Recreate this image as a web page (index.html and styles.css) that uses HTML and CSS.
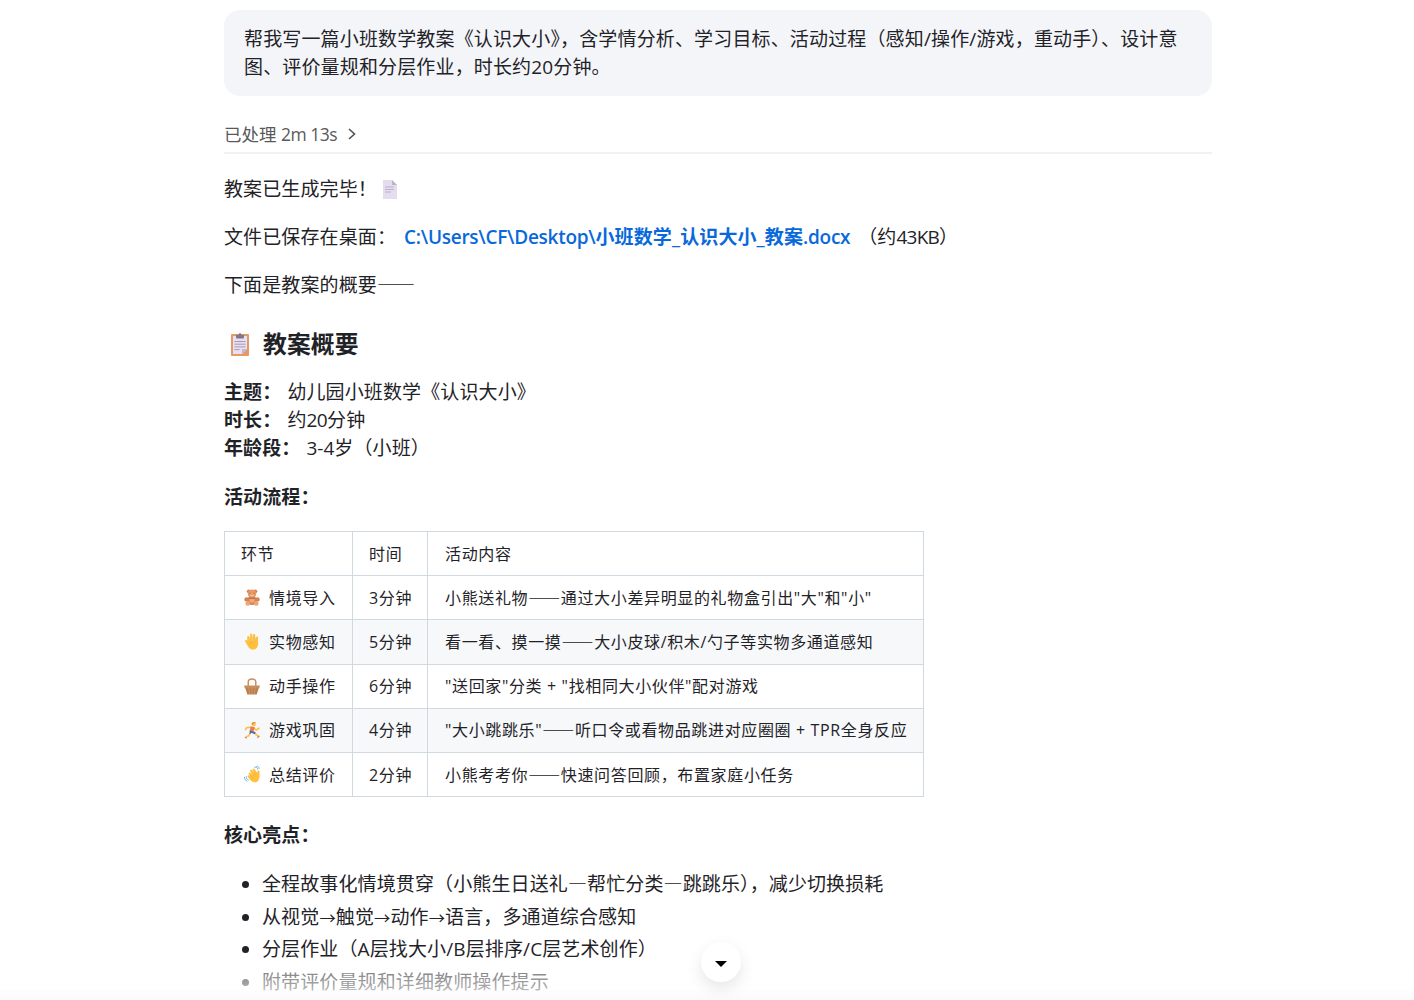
FILE: index.html
```html
<!DOCTYPE html>
<html lang="zh-CN">
<head>
  <meta charset="UTF-8">
  <meta name="viewport" content="width=device-width, initial-scale=1.0">
  <title>认识大小 - 教案</title>
  <link rel="stylesheet" href="styles.css">
</head>
<body>
  <main class="chat">
    <div class="user-message">帮我写一篇小班数学教案《认识大小》，含学情分析、学习目标、活动过程（感知/操作/游戏，重动手）、设计意图、评价量规和分层作业，时长约20分钟。</div>

    <div class="process-status">
      <span>已处理 <span class="latin">2m 13s</span></span>
      <svg class="chevron" viewBox="0 0 10 14"><path d="M2 2l5.500 5L2 12" fill="none" stroke="#4d5257" stroke-width="1.600"/></svg>
    </div>

    <div class="answer">
      <p>教案已生成完毕！
        <svg class="icon-page" viewBox="0 0 14 19"><path d="M0 0h9l5 5v14H0z" fill="#e5dcf0"/><path d="M9 0v5h5z" fill="#bdb2c9"/><path d="M2 7h9M2 9.500h9M2 12h6" stroke="#bcb1c7" stroke-width="1.200"/></svg>
      </p>
      <p>文件已保存在桌面：<a class="file-link" href="#"><span class="path">C:\Users\CF\Desktop\</span>小班数学_认识大小_教案<span class="path">.docx</span></a>（约<span class="latin size">43KB</span>）</p>
      <p>下面是教案的概要<span class="dash">——</span></p>

      <h2>
        <svg class="icon-clipboard" viewBox="0 0 18 23"><rect y="1" width="18" height="22" rx="1" fill="#e39a68"/><path d="M2 3h14v13l-5 5H2z" fill="#e8e0f1"/><path d="M11 21v-5h5z" fill="#c4b7d2"/><path d="M5 4V2h2.500C7.500-.5 10.500-.5 10.500 2H13v2c0 1-.5 1.500-1.500 1.500h-5C5.500 5.500 5 5 5 4z" fill="#80758a"/><path d="M3.500 8.500h11M3.500 11.200h11M3.500 13.900h11M3.500 16.600h5" stroke="#a69bb4" stroke-width="1"/></svg>
        <span>教案概要</span>
      </h2>

      <p class="meta">
        <strong>主题：</strong>幼儿园小班数学《认识大小》<br>
        <strong>时长：</strong>约<span class="latin">20</span>分钟<br>
        <strong>年龄段：</strong><span class="age">3-4</span>岁（小班）
      </p>

      <p class="section-title"><strong>活动流程：</strong></p>

      <table>
        <thead>
          <tr><th>环节</th><th>时间</th><th>活动内容</th></tr>
        </thead>
        <tbody>
          <tr>
            <td><div class="step">
              <svg class="emoji" viewBox="0 0 18 18"><g fill="#d9804f"><circle cx="5" cy="2.500" r="2"/><circle cx="12" cy="2.500" r="2"/><ellipse cx="8.500" cy="12" rx="5" ry="5"/><circle cx="2.700" cy="11" r="2.300"/><circle cx="14.300" cy="11" r="2.300"/></g><ellipse cx="8.500" cy="5" rx="4.500" ry="4.500" fill="#e79a66"/><circle cx="4" cy="15.300" r="2.500" fill="#eba675"/><circle cx="13" cy="15.300" r="2.500" fill="#eba675"/><ellipse cx="8.500" cy="12" rx="2.800" ry="2.500" fill="#edaa7b"/><ellipse cx="8.500" cy="6.300" rx="2" ry="1.500" fill="#f6c39b"/><path d="M6.500 4v1M10.500 4v1M8 5.700h1M6 9.800h5" stroke="#94543e" stroke-width=".9"/></svg>
              情境导入</div></td>
            <td>3分钟</td>
            <td>小熊送礼物<span class="dash">——</span>通过大小差异明显的礼物盒引出"大"和"小"</td>
          </tr>
          <tr>
            <td><div class="step">
              <svg class="emoji" viewBox="0 0 18 18"><path d="M4.600 11V4.200M7.600 9V1.800M10.700 9V2.200M13.700 10V4.800M2.200 8.500l2.500 4" stroke="#ffc03d" stroke-width="2.300" stroke-linecap="round"/><path d="M3.450 8.500h11.400c.8 5.500-1 9.100-5.500 9.100-3.500 0-5.900-3.200-5.900-9.100z" fill="#ffc03d"/><path d="M6.100 5v4M9.150 4v5M12.200 5v4M5.500 12c1.200-1.500 2.800-1.700 4.500-1.500" fill="none" stroke="#e99a2c" stroke-width=".5"/></svg>
              实物感知</div></td>
            <td>5分钟</td>
            <td>看一看、摸一摸<span class="dash">——</span>大小皮球/积木/勺子等实物多通道感知</td>
          </tr>
          <tr>
            <td><div class="step">
              <svg class="emoji" viewBox="0 0 18 18"><path d="M4.500 9V4c0-4 8-4 8 0v5" fill="none" stroke="#c98b57" stroke-width="1.500"/><path d="M0 8h17l-1 3H1z" fill="#d0935f"/><path d="M1.500 10.500h14L13.500 17.500h-10z" fill="#c08150"/><path d="M1 9.500h15M2 12.500h13M3 15h11" stroke="#a0683f" stroke-width=".6" stroke-dasharray="1 1"/><path d="M5 10l1 7M8.500 10v7M12 10l-1 7" stroke="#dca474" stroke-width=".6"/></svg>
              动手操作</div></td>
            <td>6分钟</td>
            <td>"送回家"分类 + "找相同大小伙伴"配对游戏</td>
          </tr>
          <tr>
            <td><div class="step">
              <svg class="emoji" viewBox="0 0 18 18"><path d="M7 11l-2 3.500-3 1.500M11 11l2 2.500 2.500 1.500M7 5.500L3 6 1.500 8M10.500 6.500L13 8.500l3-2" fill="none" stroke="#ffbd49" stroke-width="1.700" stroke-linecap="round" stroke-linejoin="round"/><path d="M7 4.500l4.500 1L10 10H6z" fill="#ee7b48"/><path d="M6 9l4.500 1 2 1.500-1.500 1.500-3-1.500-2 1.500z" fill="#5369b0"/><circle cx="10.500" cy="2.500" r="2.200" fill="#ffc64f"/><path d="M8 2.500C8-.5 12.500-.5 12.500 1c-2-.2-2.500.5-3 2.200z" fill="#d99339"/><path d="M1 16l1.800 1.300M14 16.500l2.300-1.500" stroke="#e96550" stroke-width="1.200"/></svg>
              游戏巩固</div></td>
            <td>4分钟</td>
            <td>"大小跳跳乐"<span class="dash">——</span>听口令或看物品跳进对应圈圈 + TPR全身反应</td>
          </tr>
          <tr>
            <td><div class="step">
              <svg class="emoji" viewBox="0 0 18 18"><path d="M6 8l5 6M7.500 5l5 6M10.300 3.800l4 6M5 11l4 4M15.300 6v5" stroke="#ffc03d" stroke-width="2.300" stroke-linecap="round"/><path d="M7 11L14 6.500c3.500 4 2.500 8.500-.5 10.500-3.500 1.500-6-1.500-8-3.500z" fill="#ffc03d"/><path d="M6.200 9.500l3.300 4M7.700 7.300l3.300 4M9.700 5.700l3 3.800" stroke="#e89a2d" stroke-width=".5"/><path d="M11 1.500c2-.8 3.500.5 3.500 2.300M12.500 0c2-.2 3.500 1.200 3.500 3M2.500 11c-.5 2 .8 3.500 2.500 4M.5 11.500c-.3 2.500 1.500 4.300 3 4.700" fill="none" stroke="#60aee0" stroke-width="1"/></svg>
              总结评价</div></td>
            <td>2分钟</td>
            <td>小熊考考你<span class="dash">——</span>快速问答回顾，布置家庭小任务</td>
          </tr>
        </tbody>
      </table>

      <p class="section-title"><strong>核心亮点：</strong></p>
      <ul>
        <li>全程故事化情境贯穿（小熊生日送礼<span class="dash">—</span>帮忙分类<span class="dash">—</span>跳跳乐），减少切换损耗</li>
        <li>从视觉<span class="arrow">→</span>触觉<span class="arrow">→</span>动作<span class="arrow">→</span>语言，多通道综合感知</li>
        <li>分层作业（A层找大小/B层排序/C层艺术创作）</li>
        <li>附带评价量规和详细教师操作提示</li>
      </ul>
    </div>
  </main>

  <div class="bottom-fade"></div>
  <button class="scroll-down" aria-label="滚动到底部">
    <svg viewBox="0 0 12 6"><path d="M0 0h12L6 6z"/></svg>
  </button>
</body>
</html>
```

FILE: styles.css
```css
* {
  box-sizing: border-box;
}
body {
  margin: 0;
  height: 1000px;
  overflow: hidden;
  background: #fff;
  color: #1f2328;
  font-family: "Open Sans", "Noto Sans CJK SC", sans-serif;
  font-size: 19px;
  line-height: 28px;
  letter-spacing: 0.12px;
}
.chat {
  width: 988px;
  margin-left: 224px;
  padding-top: 10px;
}
.user-message {
  height: 86px;
  padding: 15px 20px;
  border-radius: 16px;
  background: #f3f5f9;
  letter-spacing: 0.15px;
}
.latin {
  letter-spacing: -0.6px;
}
.size {
  letter-spacing: -0.8px;
}
.age {
  letter-spacing: 0;
}
.dash {
  font-family: "Noto Sans CJK SC", sans-serif;
  line-height: 0;
}
.arrow {
  font-size: 16.3px;
  line-height: 0;
}
.process-status {
  display: flex;
  align-items: center;
  gap: 10px;
  height: 58px;
  padding-top: 20px;
  border-bottom: 2px solid #eff2f5;
  color: #59595c;
  font-size: 17.5px;
  letter-spacing: 0;
}
.process-status .latin {
  letter-spacing: -0.5px;
}
.chevron {
  width: 10px;
  height: 14px;
}
.answer {
  padding-top: 21px;
}
p {
  margin: 0 0 20px;
}
.icon-page {
  width: 14px;
  height: 19px;
  margin-left: 1px;
  vertical-align: -3px;
}
.file-link {
  margin: 0 8px 0 8px;
  color: #0969da;
  font-weight: 600;
  text-decoration: none;
}
.path {
  letter-spacing: -0.27px;
}
h2 {
  display: flex;
  align-items: center;
  gap: 14px;
  height: 34px;
  margin: 28px 0 17px;
  padding-left: 7px;
  font-size: 23.8px;
  font-weight: 700;
}
.icon-clipboard {
  width: 18px;
  height: 23px;
}
.meta {
  margin-bottom: 21px;
}
.meta strong {
  margin-right: 6px;
}
strong {
  font-weight: 700;
}
table {
  width: 700px;
  margin: 0 0 24px;
  border-collapse: collapse;
  table-layout: fixed;
  font-size: 16px;
  letter-spacing: 0.64px;
}
th,
td {
  height: 44.2px;
  padding: 0 16px;
  border: 1px solid #d1d9e0;
  text-align: left;
  font-weight: 400;
  white-space: nowrap;
}
th:nth-child(1) {
  width: 128px;
}
th:nth-child(2) {
  width: 75px;
}
th:nth-child(3),
td:nth-child(3) {
  padding-left: 17px;
  padding-right: 0;
}
tbody tr:nth-child(even) {
  background: #f6f8fa;
}
.step {
  display: flex;
  align-items: center;
  gap: 8px;
  padding-left: 3px;
}
.emoji {
  flex: none;
  width: 17px;
  height: 17px;
}
ul {
  margin: 0;
  padding: 1px 0 0 38px;
}
li {
  height: 28px;
  margin-bottom: 4.6px;
}
.bottom-fade {
  position: fixed;
  inset: auto 0 0;
  height: 42px;
  background: linear-gradient(rgba(255, 255, 255, 0), rgba(255, 255, 255, 0.45) 34%, rgba(254, 254, 254, 0.62) 70%, #fafafa);
}
.scroll-down {
  position: fixed;
  left: 701px;
  top: 942px;
  display: flex;
  align-items: center;
  justify-content: center;
  width: 40px;
  height: 40px;
  padding: 3px 0 0;
  border: 0;
  border-radius: 50%;
  background: #fff;
  box-shadow: 0 6px 16px rgba(0, 0, 0, 0.1);
}
.scroll-down svg {
  width: 12px;
  height: 6px;
}
```
